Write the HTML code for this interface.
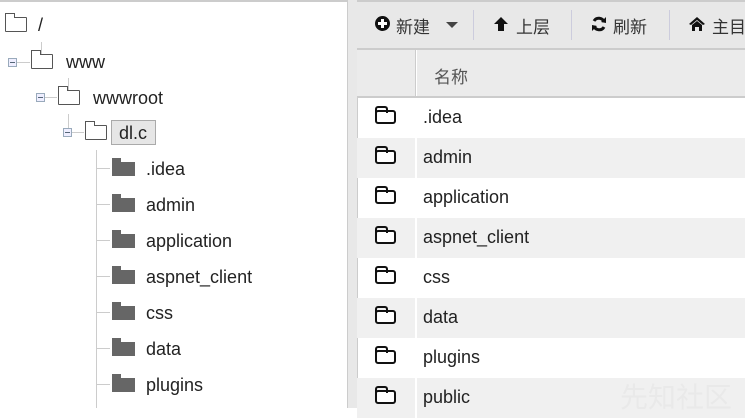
<!DOCTYPE html>
<html><head><meta charset="utf-8"><style>
body{margin:0;width:745px;height:408px;overflow:hidden;background:#fff;font-family:"Liberation Sans","Noto Sans CJK SC",sans-serif;position:relative}
.a{position:absolute}
.t{position:absolute;font-size:18px;color:#222;line-height:20px}
.fo{position:absolute;width:20px;height:13px;border:1px solid #555;border-radius:1px;background:#fff}
.fo:before{content:"";position:absolute;left:-1px;top:-5px;width:8px;height:4px;border:1px solid #555;border-bottom:none;background:#fff}
.ff{position:absolute;width:23px;height:14px;background:#666}
.ff:before{content:"";position:absolute;left:0;top:-4px;width:9px;height:4px;background:#666}
.mn{position:absolute;width:9px;height:9px;border:1px solid #9ab;background:#eef;box-sizing:border-box}
.mn:after{content:"";position:absolute;left:1px;top:3px;width:5px;height:1px;background:#567}
.hl{position:absolute;height:1px;background:#ccc}
.vl{position:absolute;width:1px;background:#ccc}
.row{position:absolute;left:357px;width:388px;height:40px}
.row .c1{position:absolute;left:0;width:58px;height:40px}
.row .c2{position:absolute;left:60px;right:0;height:40px}
.g .c1,.g .c2{background:#f0f0f0}
.rf{position:absolute;left:18px;top:12px;width:21px;height:14px;border:2px solid #111;border-radius:3px;box-sizing:border-box;background:#fff}
.rf:before{content:"";position:absolute;left:-2px;top:-6px;width:9px;height:5px;border:2px solid #111;border-bottom:none;border-radius:3px 3px 0 0;box-sizing:content-box}
.rt{position:absolute;left:66px;top:9px;font-size:18px;color:#222}
.tb{position:absolute;top:13px;font-size:17px;color:#333;white-space:nowrap}
.sep{position:absolute;top:10px;width:1px;height:30px;background:#ccd}
svg{position:absolute}
</style></head><body>
<div class="a" style="left:0;top:0;width:745px;height:2px;background:#ccc"></div>
<!-- tree -->
<div class="fo" style="left:5px;top:17px"></div><div class="t" style="left:38px;top:15px">/</div>
<div class="vl" style="left:41px;top:42px;height:14px"></div>
<div class="mn" style="left:8px;top:58px"></div><div class="hl" style="left:17px;top:62px;width:13px"></div>
<div class="fo" style="left:31px;top:54px"></div><div class="t" style="left:66px;top:52px">www</div>
<div class="vl" style="left:68px;top:78px;height:14px"></div>
<div class="mn" style="left:36px;top:93px"></div><div class="hl" style="left:45px;top:97px;width:12px"></div>
<div class="fo" style="left:58px;top:90px"></div><div class="t" style="left:93px;top:88px">wwwroot</div>
<div class="vl" style="left:68px;top:114px;height:14px"></div>
<div class="mn" style="left:63px;top:128px"></div><div class="hl" style="left:72px;top:132px;width:12px"></div>
<div class="fo" style="left:85px;top:125px"></div>
<div class="a" style="left:111px;top:120px;width:45px;height:25px;background:#e6e6e6;border:1px solid #aaa;box-sizing:border-box"></div>
<div class="t" style="left:119px;top:123px">dl.c</div>
<div class="vl" style="left:96px;top:150px;height:258px"></div>
<div class="hl" style="left:96px;top:168px;width:14px"></div><div class="ff" style="left:112px;top:162px"></div><div class="t" style="left:146px;top:159px">.idea</div>
<div class="hl" style="left:96px;top:204px;width:14px"></div><div class="ff" style="left:112px;top:198px"></div><div class="t" style="left:146px;top:195px">admin</div>
<div class="hl" style="left:96px;top:240px;width:14px"></div><div class="ff" style="left:112px;top:234px"></div><div class="t" style="left:146px;top:231px">application</div>
<div class="hl" style="left:96px;top:276px;width:14px"></div><div class="ff" style="left:112px;top:270px"></div><div class="t" style="left:146px;top:267px">aspnet_client</div>
<div class="hl" style="left:96px;top:312px;width:14px"></div><div class="ff" style="left:112px;top:306px"></div><div class="t" style="left:146px;top:303px">css</div>
<div class="hl" style="left:96px;top:348px;width:14px"></div><div class="ff" style="left:112px;top:342px"></div><div class="t" style="left:146px;top:339px">data</div>
<div class="hl" style="left:96px;top:384px;width:14px"></div><div class="ff" style="left:112px;top:378px"></div><div class="t" style="left:146px;top:375px">plugins</div>
<!-- divider -->
<div class="a" style="left:347px;top:0;width:9px;height:408px;background:#e8e8e8;border-left:1px solid #ccc;border-right:1px solid #ccc"></div>
<!-- toolbar -->
<div class="a" style="left:357px;top:2px;width:388px;height:46px;background:#e8e8e8;border-bottom:2px solid #ccc"></div>
<div class="a" style="left:375px;top:16px;width:15px;height:15px;border-radius:50%;background:#111"></div>
<div class="a" style="left:381px;top:19px;width:3px;height:9px;background:#fff"></div><div class="a" style="left:378px;top:22px;width:9px;height:3px;background:#fff"></div>
<div class="tb" style="left:396px">新建</div>
<div class="a" style="left:446px;top:22px;border:6px solid transparent;border-top:6px solid #444;border-bottom:none"></div>
<div class="sep" style="left:473px"></div>
<svg style="left:493px;top:16px" width="16" height="16" viewBox="0 0 16 16"><path d="M8 1 L15 8 L11 8 L11 15 L5 15 L5 8 L1 8 Z" fill="#111"/></svg>
<div class="tb" style="left:516px">上层</div>
<div class="sep" style="left:571px"></div>
<svg style="left:591px;top:16px" width="16" height="16" viewBox="0 0 16 16"><path d="M13 6 A5.5 5.5 0 0 0 3 5" stroke="#111" stroke-width="3" fill="none"/><path d="M3 10 A5.5 5.5 0 0 0 13 11" stroke="#111" stroke-width="3" fill="none"/><path d="M10 6 L15 7 L15 1 Z M6 10 L1 9 L1 15 Z" fill="#111"/></svg>
<div class="tb" style="left:613px">刷新</div>
<div class="sep" style="left:669px"></div>
<svg style="left:689px;top:17px" width="16" height="14" viewBox="0 0 16 14"><path d="M8 0 L16 7 L14 8 L8 3 L2 8 L0 7 Z M3 8 L8 4 L13 8 L13 14 L10 14 L10 10 L6 10 L6 14 L3 14 Z" fill="#111"/></svg>
<div class="tb" style="left:712px">主目</div>
<!-- header -->
<div class="a" style="left:357px;top:50px;width:58px;height:46px;background:#ebebeb;border-right:1px solid #ccc"></div>
<div class="a" style="left:417px;top:50px;width:328px;height:46px;background:#ebebeb"></div>
<div class="a" style="left:357px;top:96px;width:388px;height:2px;background:#ccc"></div>
<div class="a" style="left:434px;top:63px;font-size:17px;color:#555">名称</div>
<!-- rows -->
<div class="row" style="top:98px"><div class="c1"></div><div class="c2"></div><div class="rf"></div><div class="rt">.idea</div></div>
<div class="row g" style="top:138px"><div class="c1"></div><div class="c2"></div><div class="rf"></div><div class="rt">admin</div></div>
<div class="row" style="top:178px"><div class="c1"></div><div class="c2"></div><div class="rf"></div><div class="rt">application</div></div>
<div class="row g" style="top:218px"><div class="c1"></div><div class="c2"></div><div class="rf"></div><div class="rt">aspnet_client</div></div>
<div class="row" style="top:258px"><div class="c1"></div><div class="c2"></div><div class="rf"></div><div class="rt">css</div></div>
<div class="row g" style="top:298px"><div class="c1"></div><div class="c2"></div><div class="rf"></div><div class="rt">data</div></div>
<div class="row" style="top:338px"><div class="c1"></div><div class="c2"></div><div class="rf"></div><div class="rt">plugins</div></div>
<div class="row g" style="top:378px"><div class="c1"></div><div class="c2"></div><div class="rf"></div><div class="rt">public</div></div>
<div class="a" style="left:620px;top:376px;font-size:28px;color:rgba(220,220,220,0.3)">先知社区</div>
</body></html>
